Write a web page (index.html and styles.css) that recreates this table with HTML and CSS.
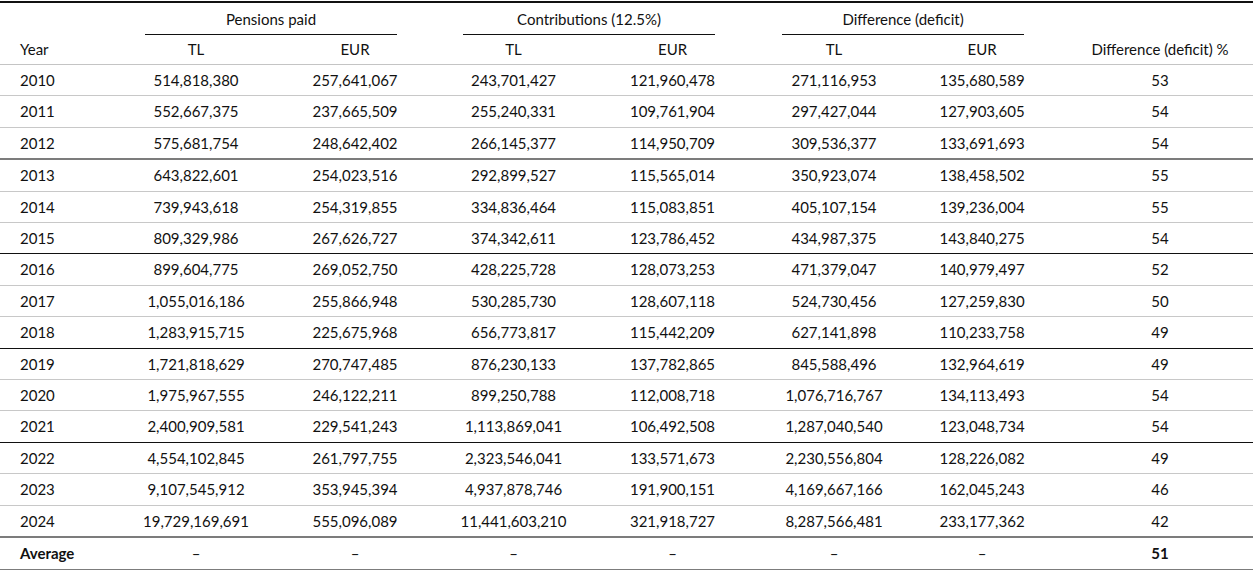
FILE: index.html
```html
<!DOCTYPE html>
<html lang="en">

<head>
  <meta charset="UTF-8">
  <meta name="viewport" content="width=device-width, initial-scale=1.0">
  <title>Pensions and contributions</title>
  <link rel="stylesheet" href="styles.css">
</head>

<body>
  <table class="data">
    <colgroup>
      <col class="c-year">
      <col class="c-tl1">
      <col class="c-eur1">
      <col class="c-tl2">
      <col class="c-eur2">
      <col class="c-tl3">
      <col class="c-eur3">
      <col class="c-pct">
    </colgroup>
    <thead>
      <tr class="head-top">
        <th class="year" rowspan="2">Year</th>
        <th class="group" colspan="2"><div class="group-label">Pensions paid</div></th>
        <th class="group" colspan="2"><div class="group-label">Contributions (12.5%)</div></th>
        <th class="group" colspan="2"><div class="group-label group-label--last">Difference (deficit)</div></th>
        <th class="pct" rowspan="2">Difference (deficit) %</th>
      </tr>
      <tr class="head-sub">
        <th>TL</th>
        <th>EUR</th>
        <th>TL</th>
        <th>EUR</th>
        <th>TL</th>
        <th>EUR</th>
      </tr>
    </thead>
    <tbody>
      <tr><td class="year">2010</td><td>514,818,380</td><td>257,641,067</td><td>243,701,427</td><td>121,960,478</td><td>271,116,953</td><td>135,680,589</td><td class="pct">53</td></tr>
      <tr><td class="year">2011</td><td>552,667,375</td><td>237,665,509</td><td>255,240,331</td><td>109,761,904</td><td>297,427,044</td><td>127,903,605</td><td class="pct">54</td></tr>
      <tr class="sep soft"><td class="year">2012</td><td>575,681,754</td><td>248,642,402</td><td>266,145,377</td><td>114,950,709</td><td>309,536,377</td><td>133,691,693</td><td class="pct">54</td></tr>
      <tr><td class="year">2013</td><td>643,822,601</td><td>254,023,516</td><td>292,899,527</td><td>115,565,014</td><td>350,923,074</td><td>138,458,502</td><td class="pct">55</td></tr>
      <tr><td class="year">2014</td><td>739,943,618</td><td>254,319,855</td><td>334,836,464</td><td>115,083,851</td><td>405,107,154</td><td>139,236,004</td><td class="pct">55</td></tr>
      <tr class="sep"><td class="year">2015</td><td>809,329,986</td><td>267,626,727</td><td>374,342,611</td><td>123,786,452</td><td>434,987,375</td><td>143,840,275</td><td class="pct">54</td></tr>
      <tr><td class="year">2016</td><td>899,604,775</td><td>269,052,750</td><td>428,225,728</td><td>128,073,253</td><td>471,379,047</td><td>140,979,497</td><td class="pct">52</td></tr>
      <tr><td class="year">2017</td><td>1,055,016,186</td><td>255,866,948</td><td>530,285,730</td><td>128,607,118</td><td>524,730,456</td><td>127,259,830</td><td class="pct">50</td></tr>
      <tr class="sep"><td class="year">2018</td><td>1,283,915,715</td><td>225,675,968</td><td>656,773,817</td><td>115,442,209</td><td>627,141,898</td><td>110,233,758</td><td class="pct">49</td></tr>
      <tr><td class="year">2019</td><td>1,721,818,629</td><td>270,747,485</td><td>876,230,133</td><td>137,782,865</td><td>845,588,496</td><td>132,964,619</td><td class="pct">49</td></tr>
      <tr><td class="year">2020</td><td>1,975,967,555</td><td>246,122,211</td><td>899,250,788</td><td>112,008,718</td><td>1,076,716,767</td><td>134,113,493</td><td class="pct">54</td></tr>
      <tr class="sep"><td class="year">2021</td><td>2,400,909,581</td><td>229,541,243</td><td>1,113,869,041</td><td>106,492,508</td><td>1,287,040,540</td><td>123,048,734</td><td class="pct">54</td></tr>
      <tr><td class="year">2022</td><td>4,554,102,845</td><td>261,797,755</td><td>2,323,546,041</td><td>133,571,673</td><td>2,230,556,804</td><td>128,226,082</td><td class="pct">49</td></tr>
      <tr><td class="year">2023</td><td>9,107,545,912</td><td>353,945,394</td><td>4,937,878,746</td><td>191,900,151</td><td>4,169,667,166</td><td>162,045,243</td><td class="pct">46</td></tr>
      <tr class="sep soft"><td class="year">2024</td><td>19,729,169,691</td><td>555,096,089</td><td>11,441,603,210</td><td>321,918,727</td><td>8,287,566,481</td><td>233,177,362</td><td class="pct">42</td></tr>
      <tr class="sep soft total"><td class="year">Average</td><td>–</td><td>–</td><td>–</td><td>–</td><td>–</td><td>–</td><td class="pct">51</td></tr>
    </tbody>
  </table>
</body>

</html>
```

FILE: styles.css
```css
* {
  margin: 0;
  padding: 0;
  box-sizing: border-box;
}

body {
  background: #fff;
  color: #111;
  font-family: Lato, "Liberation Sans", sans-serif;
  font-size: 15px;
}

.data {
  width: 1253px;
  margin-top: 1px;
  border-collapse: collapse;
  table-layout: fixed;
  border-top: 2px solid #111;
}

.c-year { width: 112px; }
.c-tl1 { width: 168px; }
.c-eur1 { width: 150px; }
.c-tl2 { width: 167px; }
.c-eur2 { width: 151px; }
.c-tl3 { width: 172px; }
.c-eur3 { width: 124px; }
.c-pct { width: 209px; }

th,
td {
  font-weight: normal;
  text-align: center;
  white-space: nowrap;
}

th {
  line-height: 20px;
}

.head-top th {
  padding-top: 6px;
  vertical-align: top;
}

.head-top th.year,
.head-top th.pct {
  vertical-align: bottom;
  padding-bottom: 5px;
  border-bottom: 1px solid #c4c4c4;
}

.group-label {
  margin: 0 33px;
  padding-bottom: 5px;
  border-bottom: 1px solid #111;
}

.group-label--last {
  margin: 0 20px 0 34px;
}

.head-sub th {
  padding: 4px 0 5px;
  border-bottom: 1px solid #c4c4c4;
}

.year {
  text-align: left;
  padding-left: 20px;
}

.pct {
  padding-left: 23px;
}

td {
  padding: 5px 0;
  line-height: 20.4px;
  border-bottom: 1px solid #c8c8c8;
}

.sep td {
  border-bottom: 1px solid #111;
}

.sep.soft td {
  border-bottom: 2px solid #7c7c7c;
}

.total td.year,
.total td.pct {
  font-weight: bold;
}
```
